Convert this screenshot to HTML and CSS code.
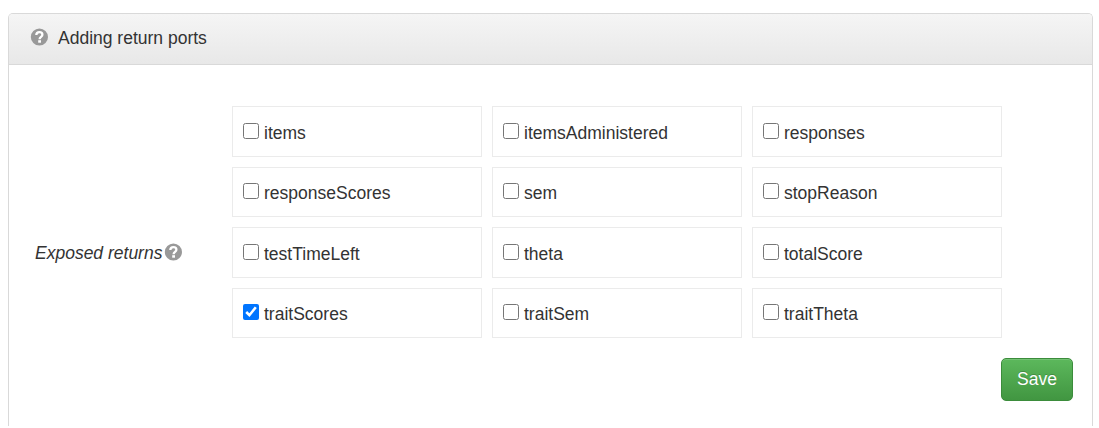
FILE: index.html
```
<!DOCTYPE html>
<html lang="en">
<head>
<meta charset="utf-8">
<title>Adding return ports</title>
<link rel="stylesheet" href="styles.css">
</head>
<body>
<section class="panel">
  <header class="panel-heading">
    <svg class="help" viewBox="0 0 18 18"><circle cx="9.4" cy="9" r="8.6" fill="#999"/><path d="M6.3 7C6.4 4.9 7.6 4.2 9.4 4.2C11.2 4.2 12.4 5.2 12.4 6.7C12.4 8.8 9.6 8.9 9.6 11.2" fill="none" stroke="#fff" stroke-width="2.3"/><path d="M8.2 12.2h2.8v2.5H8.2z" fill="#fff"/></svg>
    <span>Adding return ports</span>
  </header>
  <form class="panel-body">
    <div class="field">
      <div class="field-label"><em>Exposed returns</em><svg class="help" viewBox="0 0 18 18"><circle cx="9.4" cy="9" r="8.6" fill="#999"/><path d="M6.3 7C6.4 4.9 7.6 4.2 9.4 4.2C11.2 4.2 12.4 5.2 12.4 6.7C12.4 8.8 9.6 8.9 9.6 11.2" fill="none" stroke="#fff" stroke-width="2.3"/><path d="M8.2 12.2h2.8v2.5H8.2z" fill="#fff"/></svg></div>
      <div class="options">
        <label class="option"><input type="checkbox"><span>items</span></label>
        <label class="option"><input type="checkbox"><span>itemsAdministered</span></label>
        <label class="option"><input type="checkbox"><span>responses</span></label>
        <label class="option"><input type="checkbox"><span>responseScores</span></label>
        <label class="option"><input type="checkbox"><span>sem</span></label>
        <label class="option"><input type="checkbox"><span>stopReason</span></label>
        <label class="option"><input type="checkbox"><span>testTimeLeft</span></label>
        <label class="option"><input type="checkbox"><span>theta</span></label>
        <label class="option"><input type="checkbox"><span>totalScore</span></label>
        <label class="option"><input type="checkbox" checked><span>traitScores</span></label>
        <label class="option"><input type="checkbox"><span>traitSem</span></label>
        <label class="option"><input type="checkbox"><span>traitTheta</span></label>
      </div>
    </div>
    <div class="actions"><button class="save" type="button">Save</button></div>
  </form>
</section>
</body>
</html>
```
FILE: styles.css
```
* { box-sizing: border-box; }
body {
  margin: 0;
  padding: 13px 6px 2px 8px;
  height: 428px;
  overflow: hidden;
  background: #fff;
  color: #333;
  font: 17.5px/25px "Liberation Sans", Arial, sans-serif;
}
.panel {
  height: 413px;
  border: 1px solid #d9d9d9;
  border-bottom: 0;
  border-radius: 5px 5px 0 0;
}
.panel-heading {
  display: flex;
  align-items: center;
  gap: 10px;
  height: 51px;
  padding: 0 21px 2px;
  border-bottom: 1px solid #d9d9d9;
  border-radius: 4px 4px 0 0;
  background: linear-gradient(#f5f5f5, #e8e8e8);
}
.help {
  flex: none;
  width: 18px;
  height: 18px;
  margin-bottom: 2px;
}
.panel-body {
  margin: 0;
  padding: 41px 19px 0 26px;
}
.field { display: flex; }
.field-label {
  display: flex;
  align-items: center;
  gap: 2px;
  width: 197px;
  padding-top: 62px;
}
.options {
  display: grid;
  grid-template-columns: repeat(3, 250px);
  grid-template-rows: 51px 50px 51px 50px;
  gap: 10px;
}
.option {
  display: flex;
  align-items: center;
  gap: 5px;
  padding: 3px 10px 0;
  border: 1px solid #ebebeb;
}
.option input {
  width: 16px;
  height: 16px;
  margin: 0 0 5px;
}
.actions {
  display: flex;
  justify-content: flex-end;
  padding-top: 20px;
}
.save {
  width: 72px;
  height: 43px;
  padding: 0;
  border: 1px solid #3b8c3b;
  border-radius: 5px;
  background: linear-gradient(#5cb85c, #419641);
  box-shadow: inset 0 1px 0 rgba(255, 255, 255, 0.15);
  color: #fff;
  font: inherit;
  text-shadow: 0 -1px 0 rgba(0, 0, 0, 0.2);
}
```
